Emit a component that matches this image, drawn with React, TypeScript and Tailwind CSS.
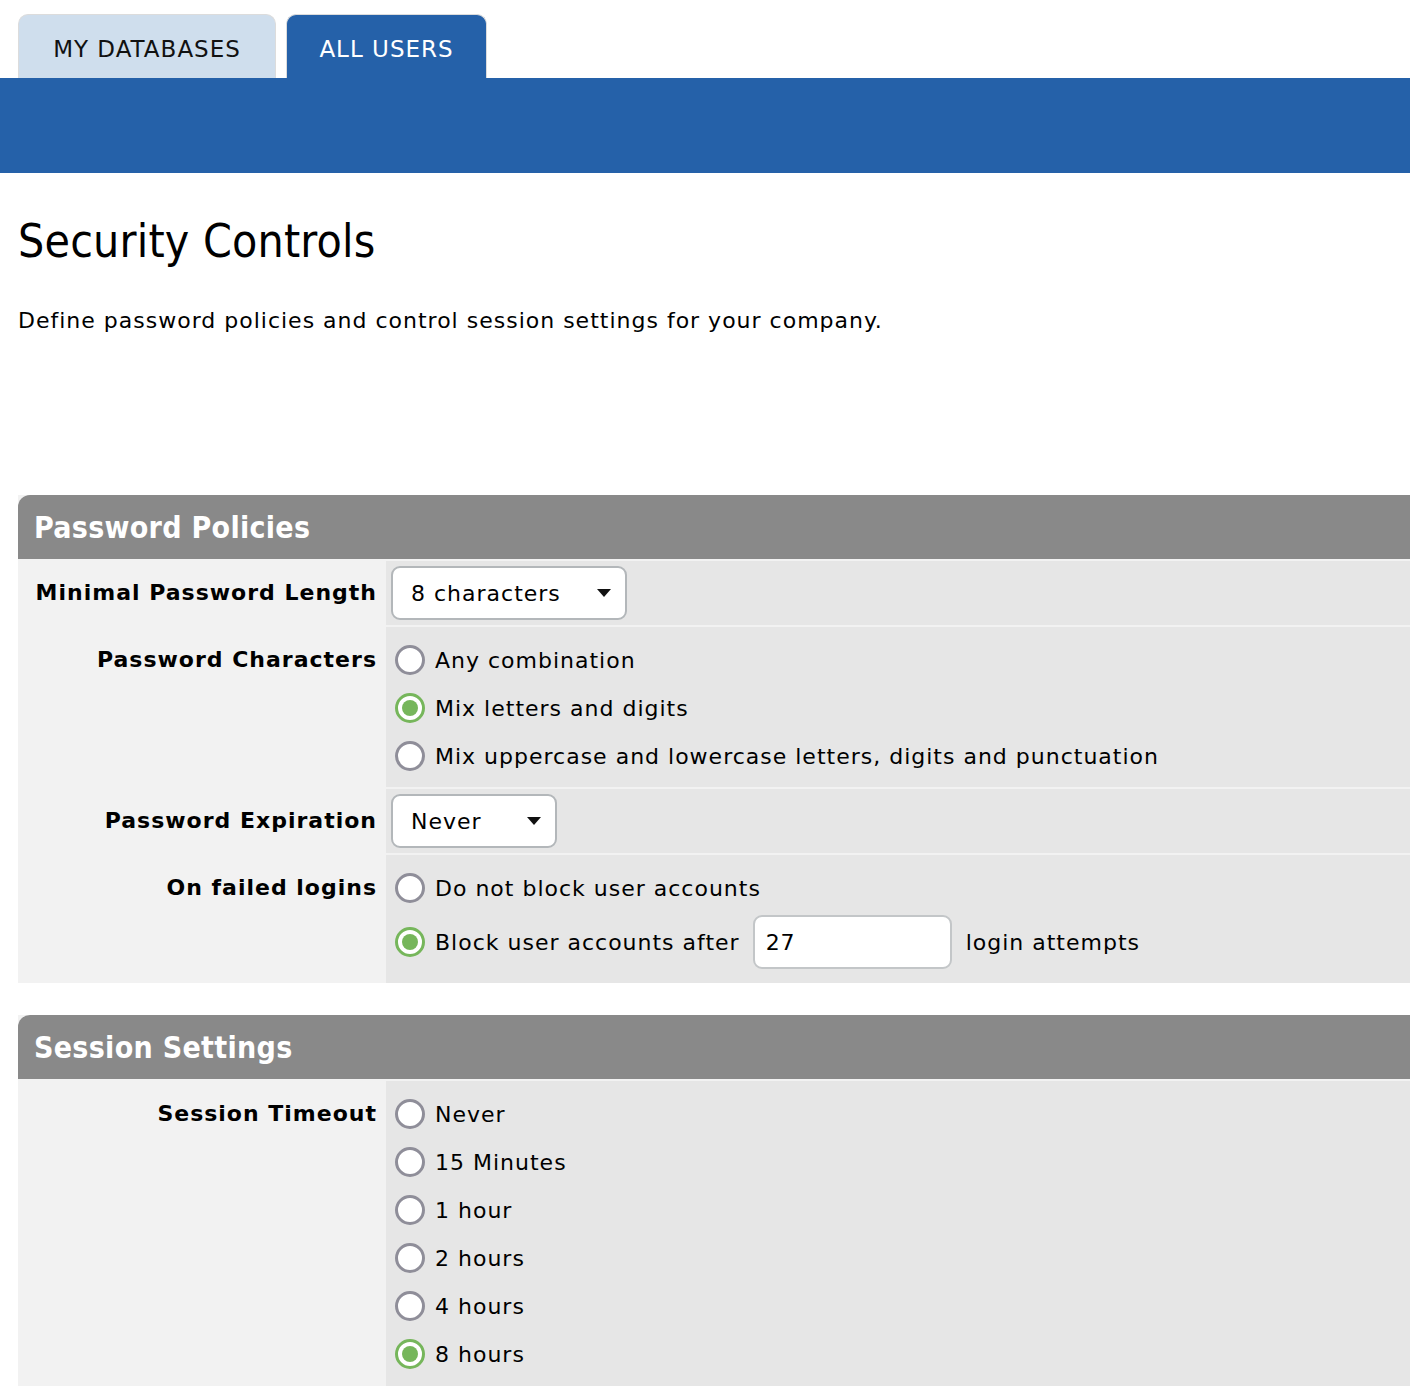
import React, { useState } from 'react';

const Caret = () => (
    <svg width="14" height="8" viewBox="0 0 14 8" className="shrink-0">
        <path d="M0 0 L14 0 L7 8 Z" fill="#111" />
    </svg>
);

const Radio = ({ checked }: { checked: boolean }) => (
    checked ? (
        <span className="w-[30px] h-[30px] rounded-full border-[3px] border-[#76b65b] bg-white flex items-center justify-center shrink-0">
            <span className="w-[16px] h-[16px] rounded-full bg-[#76b65b]" />
        </span>
    ) : (
        <span className="w-[30px] h-[30px] rounded-full border-[3px] border-[#8f8e99] bg-white shrink-0" />
    )
);

const Option = ({ label, checked, onClick }: { label: string, checked: boolean, onClick: () => void }) => (
    <div className="flex items-center gap-[10px] h-[48px] ml-[4px] cursor-pointer" onClick={onClick}>
        <Radio checked={checked} />
        <span>{label}</span>
    </div>
);

const Select = ({ value, width }: { value: string, width: string }) => (
    <div className={`flex items-center justify-between h-[54px] bg-white border-2 border-[#b3b7ba] rounded-[9px] pl-[18px] pr-[14px] ${width}`}>
        <span>{value}</span>
        <Caret />
    </div>
);

const Header = ({ title }: { title: string }) => (
    <div className="h-[64px] bg-[#898989] rounded-tl-[12px] flex items-center pl-[16px] text-white font-bold text-[30px] tracking-[0.3px]" style={{ fontFamily: '"DejaVu Sans Condensed", "DejaVu Sans", sans-serif' }}>
        {title}
    </div>
);

const Row = ({ label, children }: { label: string, children: React.ReactNode }) => (
    <div className="grid grid-cols-[368px_1fr]">
        <div className="text-right pr-[9px] font-bold pt-[9px] leading-[48px]">{label}</div>
        <div className="bg-[#e6e6e6] pl-[5px]">{children}</div>
    </div>
);

const App = () => {
    const [chars, setChars] = useState(1);
    const [block, setBlock] = useState(1);
    const [timeout, setTimeoutVal] = useState(5);
    const charOptions = ['Any combination', 'Mix letters and digits', 'Mix uppercase and lowercase letters, digits and punctuation'];
    const timeouts = ['Never', '15 Minutes', '1 hour', '2 hours', '4 hours', '8 hours'];

    return (
        <div className="w-full min-h-[1400px] bg-white text-black text-[22px] tracking-[1px] overflow-hidden" style={{ fontFamily: '"DejaVu Sans", Verdana, sans-serif' }}>
            <div className="flex items-end gap-[10px] pl-[18px] pt-[14px]">
                <div className="w-[258px] h-[64px] pt-[5px] bg-[#cfdeed] border border-b-0 border-[#dcdcdc] rounded-t-[10px] flex items-center justify-center text-[23px] text-[#111]">
                    MY DATABASES
                </div>
                <div className="w-[201px] h-[64px] pt-[5px] bg-[#2561a9] border border-b-0 border-[#dcdcdc] rounded-t-[10px] flex items-center justify-center text-[23px] text-white">
                    ALL USERS
                </div>
            </div>
            <div className="h-[95px] bg-[#2561a9]" />

            <div className="pl-[18px]">
                <h1 className="text-[46px] leading-[56px] mt-[40px] tracking-[0.2px]" style={{ fontFamily: '"DejaVu Sans Condensed", "DejaVu Sans", sans-serif' }}>Security Controls</h1>
                <p className="mt-[38px] leading-[28px]">Define password policies and control session settings for your company.</p>

                <div className="mt-[160px] bg-[#f2f2f2] flex flex-col gap-[2px]">
                    <Header title="Password Policies" />
                    <div className="grid grid-cols-[368px_1fr]">
                        <div className="text-right pr-[9px] font-bold leading-[64px]">Minimal Password Length</div>
                        <div className="bg-[#e6e6e6] pl-[5px] h-[64px] flex items-center">
                            <Select value="8 characters" width="w-[236px]" />
                        </div>
                    </div>
                    <Row label="Password Characters">
                        <div className="pt-[9px] pb-[7px]">
                            {charOptions.map((o, i) => (
                                <Option key={o} label={o} checked={chars === i} onClick={() => setChars(i)} />
                            ))}
                        </div>
                    </Row>
                    <div className="grid grid-cols-[368px_1fr]">
                        <div className="text-right pr-[9px] font-bold leading-[64px]">Password Expiration</div>
                        <div className="bg-[#e6e6e6] pl-[5px] h-[64px] flex items-center">
                            <Select value="Never" width="w-[166px]" />
                        </div>
                    </div>
                    <Row label="On failed logins">
                        <div className="pt-[9px] pb-[11px]">
                            <Option label="Do not block user accounts" checked={block === 0} onClick={() => setBlock(0)} />
                            <div className="flex items-center h-[60px] ml-[4px]">
                                <div className="flex items-center gap-[10px] cursor-pointer" onClick={() => setBlock(1)}>
                                    <Radio checked={block === 1} />
                                    <span>Block user accounts after</span>
                                </div>
                                <input defaultValue="27" className="ml-[13px] w-[199px] h-[54px] bg-white border-2 border-[#c3c6c8] rounded-[9px] pl-[11px] outline-none" />
                                <span className="ml-[14px]">login attempts</span>
                            </div>
                        </div>
                    </Row>
                </div>

                <div className="mt-[32px] bg-[#f2f2f2] flex flex-col gap-[2px]">
                    <Header title="Session Settings" />
                    <Row label="Session Timeout">
                        <div className="pt-[9px] pb-[8px]">
                            {timeouts.map((o, i) => (
                                <Option key={o} label={o} checked={timeout === i} onClick={() => setTimeoutVal(i)} />
                            ))}
                        </div>
                    </Row>
                </div>
            </div>
        </div>
    );
}

export default App;
